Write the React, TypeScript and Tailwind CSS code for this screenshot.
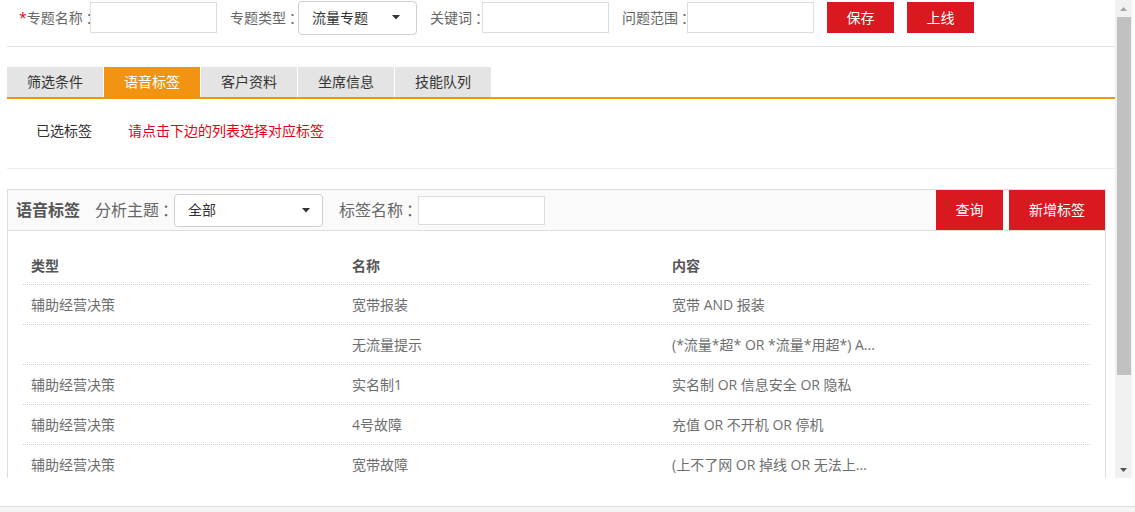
import React from "react";

const rows: [string, string, string][] = [
  ["辅助经营决策", "宽带报装", "宽带 AND 报装"],
  ["", "无流量提示", "(*流量*超* OR *流量*用超*) A..."],
  ["辅助经营决策", "实名制1", "实名制 OR 信息安全 OR 隐私"],
  ["辅助经营决策", "4号故障", "充值 OR 不开机 OR 停机"],
  ["辅助经营决策", "宽带故障", "(上不了网 OR 掉线 OR 无法上..."],
];

function Caret() {
  return (
    <svg width="8" height="5" viewBox="0 0 8 5" className="shrink-0">
      <path d="M0 0 L8 0 L4 4.5 Z" fill="#333" />
    </svg>
  );
}

function Colon() {
  return <span className="ml-[3px]">：</span>;
}

export default function App() {
  return (
    <div className="w-[1135px] h-[512px] bg-white overflow-hidden font-['Open_Sans','Noto_Sans_CJK_SC',sans-serif] text-[14px] text-[#666]">
      <div className="flex h-[478px] overflow-hidden">
        {/* content */}
        <div className="w-[1115px] shrink-0 pl-[7px]">
          {/* top form row */}
          <div className="h-[47px] border-b border-[#e2e2e2]">
            <div className="flex items-center h-[35px] pl-[12px]">
              <div className="w-[71px] shrink-0 whitespace-nowrap leading-none">
                <span className="text-[#e60012]">*</span>专题名称<Colon />
              </div>
              <div className="relative w-[127px] h-[31px] border border-[#dcdcdc] bg-white shrink-0" />
              <div className="w-[68px] ml-[13px] shrink-0 whitespace-nowrap leading-none">专题类型<Colon /></div>
              <div className="relative w-[119px] h-[34px] border border-[#cfcfcf] rounded-[4px] bg-white shrink-0 flex items-center justify-between pl-[13px] pr-[16px] text-[#333]">
                <span className="leading-none">流量专题</span>
                <Caret />
              </div>
              <div className="w-[52px] ml-[13px] shrink-0 whitespace-nowrap leading-none">关键词<Colon /></div>
              <div className="relative w-[127px] h-[31px] border border-[#dcdcdc] bg-white shrink-0" />
              <div className="w-[65px] ml-[13px] shrink-0 whitespace-nowrap leading-none">问题范围<Colon /></div>
              <div className="relative w-[127px] h-[31px] border border-[#dcdcdc] bg-white shrink-0" />
              <button className="ml-[13px] w-[67px] h-[31px] bg-[#d9181f] text-white leading-none shrink-0">保存</button>
              <button className="ml-[13px] w-[67px] h-[31px] bg-[#d9181f] text-white leading-none shrink-0">上线</button>
            </div>
          </div>

          {/* tabs */}
          <div className="mt-[20px] flex gap-[1px] border-b-2 border-[#ef9413]">
            {["筛选条件", "语音标签", "客户资料", "坐席信息", "技能队列"].map((t) => (
              <div
                key={t}
                className={
                  t === "语音标签"
                    ? "w-[96px] h-[30px] flex items-center justify-center bg-[#f39312] text-white leading-none"
                    : "w-[96px] h-[30px] flex items-center justify-center bg-[#e4e4e4] text-[#333] leading-none"
                }
              >
                {t}
              </div>
            ))}
          </div>

          {/* selected tags */}
          <div className="h-[70px] flex items-center pl-[29px] border-b border-[#ececec] pb-[6px]">
            <span className="text-[#333] leading-none">已选标签</span>
            <span className="ml-[36px] text-[#e60012] leading-none">请点击下边的列表选择对应标签</span>
          </div>

          {/* panel */}
          <div className="mt-[20px] mr-[9px]">
            <div className="h-[42px] border border-[#dddddd] bg-[#fafafa] flex items-center pl-[8px]">
              <span className="font-bold text-[16px] text-[#555] leading-none">语音标签</span>
              <span className="ml-[15px] text-[16px] text-[#666] leading-none w-[79px] whitespace-nowrap">分析主题<Colon /></span>
              <div className="w-[149px] h-[33px] border border-[#cfcfcf] rounded-[4px] bg-white flex items-center justify-between pl-[13px] pr-[12px] text-[#333]">
                <span className="leading-none">全部</span>
                <Caret />
              </div>
              <span className="ml-[16px] text-[16px] text-[#666] leading-none w-[79px] whitespace-nowrap">标签名称<Colon /></span>
              <div className="w-[127px] h-[29px] border border-[#dcdcdc] bg-white" />
              <div className="flex-1" />
              <button className="w-[67px] h-[40px] bg-[#d9181f] text-white leading-none">查询</button>
              <button className="ml-[6px] w-[96px] h-[40px] bg-[#d9181f] text-white leading-none">新增标签</button>
            </div>
            <div className="border-x border-[#dddddd] px-[15px] pt-[16px] h-[300px]">
              <div className="grid grid-cols-[321px_320px_1fr] h-[38px] items-center border-b border-dotted border-[#cccccc] font-bold text-[#555]">
                <div className="pl-[8px] leading-none">类型</div>
                <div className="pl-[8px] leading-none">名称</div>
                <div className="pl-[8px] leading-none">内容</div>
              </div>
              {rows.map((r, i) => (
                <div
                  key={i}
                  className="grid grid-cols-[321px_320px_1fr] h-[40px] items-center border-b border-dotted border-[#cccccc] text-[#6e6e6e]"
                >
                  <div className="pl-[8px] leading-none">{r[0]}</div>
                  <div className="pl-[8px] leading-none">{r[1]}</div>
                  <div className="pl-[8px] leading-none">{r[2]}</div>
                </div>
              ))}
            </div>
          </div>
        </div>

        {/* scrollbar */}
        <div className="w-[17px] shrink-0 bg-[#f1f1f1] flex flex-col items-center">
          <div className="h-[17px] w-full flex items-center justify-center">
            <svg width="7" height="4" viewBox="0 0 7 4">
              <path d="M0 4 L7 4 L3.5 0 Z" fill="#a3a3a3" />
            </svg>
          </div>
          <div className="w-[14px] h-[358px] bg-[#c1c1c1]" />
          <div className="flex-1" />
          <div className="h-[17px] w-full flex items-center justify-center">
            <svg width="7" height="4" viewBox="0 0 7 4">
              <path d="M0 0 L7 0 L3.5 4 Z" fill="#505050" />
            </svg>
          </div>
        </div>
        <div className="flex-1 bg-white" />
      </div>
      <div className="h-[28px] bg-white" />
      <div className="h-[6px] border-t border-[#dedede] bg-[#f5f5f5]" />
    </div>
  );
}
